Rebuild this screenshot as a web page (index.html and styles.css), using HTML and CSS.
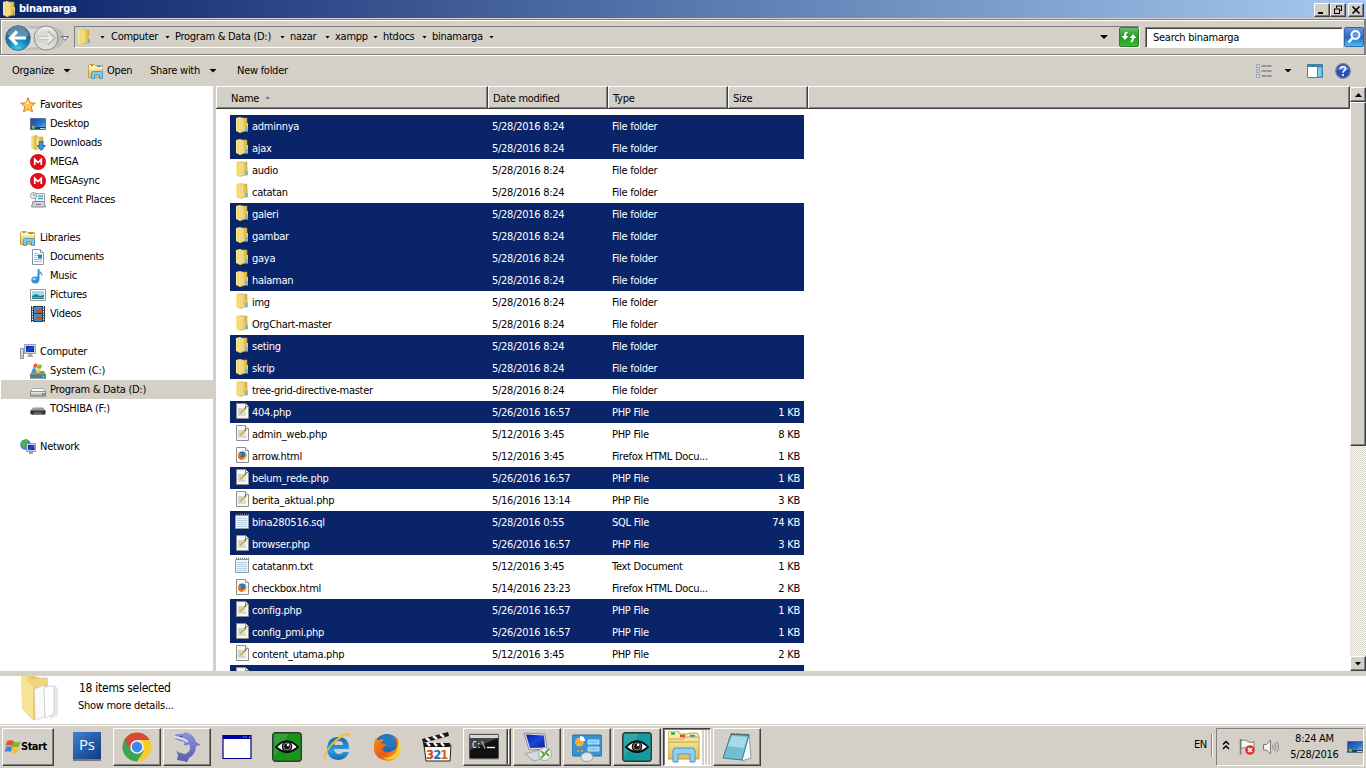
FILE: index.html
```html
<!DOCTYPE html>
<html lang="en">
<head>
<meta charset="utf-8">
<title>binamarga</title>
<link rel="stylesheet" href="styles.css">
</head>
<body>
<svg class="defs" width="0" height="0" aria-hidden="true">
  <defs>
    <linearGradient id="gold" x1="0" x2="1" y1="0" y2="0"><stop offset="0" stop-color="#fbf0a9"/><stop offset=".45" stop-color="#e9cc62"/><stop offset="1" stop-color="#d3ac3d"/></linearGradient>
    <linearGradient id="goldv" x1="0" x2="0" y1="0" y2="1"><stop offset="0" stop-color="#fff5bd"/><stop offset="1" stop-color="#e3bd55"/></linearGradient>
    <linearGradient id="sky" x1="0" x2="1" y1="0" y2="1"><stop offset="0" stop-color="#1a3f9c"/><stop offset=".6" stop-color="#2d77cf"/><stop offset="1" stop-color="#8cd2f6"/></linearGradient>
    <linearGradient id="navy" x1="0" x2="1" y1="0" y2="1"><stop offset="0" stop-color="#0418a8"/><stop offset=".5" stop-color="#1b48e0"/><stop offset="1" stop-color="#0b1c85"/></linearGradient>
    <linearGradient id="drv" x1="0" x2="0" y1="0" y2="1"><stop offset="0" stop-color="#f4f4f4"/><stop offset="1" stop-color="#a3a6a8"/></linearGradient>
    <radialGradient id="backg" cx=".5" cy=".95" r=".9"><stop offset="0" stop-color="#35d5f8"/><stop offset=".45" stop-color="#1685bd"/><stop offset="1" stop-color="#1d5383"/></radialGradient>
    <linearGradient id="fwdg" x1="0" x2="0" y1="0" y2="1"><stop offset="0" stop-color="#efefed"/><stop offset=".5" stop-color="#cfcfcd"/><stop offset="1" stop-color="#e8e8e6"/></linearGradient>
    <linearGradient id="green" x1="0" x2="0" y1="0" y2="1"><stop offset="0" stop-color="#6fc06d"/><stop offset=".5" stop-color="#1e9a1c"/><stop offset="1" stop-color="#35c331"/></linearGradient>
    <linearGradient id="srch" x1="0" x2="0" y1="0" y2="1"><stop offset="0" stop-color="#6a9be4"/><stop offset=".5" stop-color="#2468c9"/><stop offset="1" stop-color="#43c6f2"/></linearGradient>
    <linearGradient id="ps" x1="0" x2="1" y1="0" y2="1"><stop offset="0" stop-color="#3f82d0"/><stop offset="1" stop-color="#0f3b7e"/></linearGradient>
    <linearGradient id="ieg" x1="0" x2="0" y1="0" y2="1"><stop offset="0" stop-color="#1565ae"/><stop offset=".6" stop-color="#2aa0e4"/><stop offset="1" stop-color="#1666b0"/></linearGradient>
    <linearGradient id="ffg" x1="0" x2="1" y1="0" y2="1"><stop offset="0" stop-color="#f7941d"/><stop offset=".55" stop-color="#e55b17"/><stop offset="1" stop-color="#ffc928"/></linearGradient>
    <linearGradient id="dol" x1="0" x2="0" y1="0" y2="1"><stop offset="0" stop-color="#8f93dc"/><stop offset="1" stop-color="#5b5cae"/></linearGradient>

    <symbol id="folder" viewBox="0 0 16 16"><path d="M2 1l4-1 3 1v14l-3 1-4-2z" fill="url(#gold)"/><path d="M7 1h6v13l-6 1z" fill="url(#gold)" stroke="#c9a440" stroke-width=".5"/><path d="M6 .5v15" stroke="#fff6c7" stroke-width="1"/><path d="M12.500 6h1.500v8.500h-1.500z" fill="#ead27b"/><path d="M12 10h1.500v4h-1.500z" fill="#53a9de"/></symbol>
    <symbol id="php" viewBox="0 0 16 16"><path d="M2.500.5h9l3 3v12h-12z" fill="#f7f7f5" stroke="#8e8e8c"/><path d="M11.500.5v3h3" fill="#fff" stroke="#8e8e8c"/><path d="M4 5h8v7H4z" fill="#dfe6e6"/><path d="M4 6h5M4 8h4M4 10h3M4 12h8" stroke="#adb8ba" stroke-width=".8"/><path d="M6.500 10.500l5-5.500" stroke="#d1ab27" stroke-width="1.600"/><path d="M11 5.500l1-1.200" stroke="#555" stroke-width="1.500"/></symbol>
    <symbol id="txt" viewBox="0 0 16 16"><path d="M1.500 2.500h13v13h-13z" fill="#edf5fb" stroke="#8d9aa4"/><path d="M3 5.500h10M3 7.500h10M3 9.500h10M3 11.500h10M3 13.500h10" stroke="#a9c5da" stroke-width=".8"/><path d="M2 1.500h13" stroke="#777" stroke-width="1.600" stroke-dasharray="1 1"/></symbol>
    <symbol id="ff" viewBox="0 0 32 32"><circle cx="16" cy="15" r="13.500" fill="#2468b5"/><path d="M9 5c5-4 12-3 16 1 3 3 2 8-1 10-5-1-8 0-12-2z" fill="#237bbb"/><path d="M4 6c1 1 2 2 3 2 2-1 4-1 6 0-2 1-3 2-3 4 2 0 4 0 5 1-1 2-3 2-4 4 1 4 6 5 10 3 2-1 4-2 5-4 1-5-1-9-4-12 6 2 9 8 8 14-1 8-7 13-15 12C7 29 1 23 2 15c0-4 1-7 2-9z" fill="url(#ffg)"/><path d="M27 6c4 5 5 12 1 18-4 5-11 6-16 3 9 1 14-5 15-10 1-4 1-8 0-11z" fill="#ffd02e"/></symbol>
    <symbol id="html" viewBox="0 0 16 16"><path d="M2.500.5h9l3 3v12h-12z" fill="#fafafa" stroke="#8e8e8c"/><path d="M11.500.5v3h3" fill="#fff" stroke="#8e8e8c"/><use href="#ff" x="3.500" y="4" width="9.500" height="9.500"/></symbol>
    <symbol id="star" viewBox="0 0 16 16"><path d="M8 .8l2 5 5.300.4-4.100 3.500 1.400 5.300L8 12.100 3.400 15l1.400-5.300L.700 6.200 6 5.800z" fill="#ffc653" stroke="#dd7f1f" stroke-width="1"/><path d="M8 3l1 4H5z" fill="#ffeaa0"/></symbol>
    <symbol id="desktop" viewBox="0 0 16 16"><path d="M.5 2.500h15v11H.5z" fill="url(#sky)" stroke="#56708e"/><path d="M1 11h14v2H1z" fill="#263c5e"/><circle cx="3.500" cy="11.500" r="1.800" fill="#4caf50"/><circle cx="3" cy="11" r=".9" fill="#f2a23a"/><path d="M10 12.500h5" stroke="#b5d3ee"/></symbol>
    <symbol id="downloads" viewBox="0 0 16 16"><path d="M1 1l6-1v15l-6-1z" fill="url(#gold)"/><path d="M6 2h7v12H6z" fill="url(#gold)" stroke="#c9a440" stroke-width=".6"/><path d="M9.500 6.500h3.500v4h2.500L11.300 15.500 7 10.500h2.500z" fill="#3796df" stroke="#1d5f9f" stroke-width=".8"/></symbol>
    <symbol id="mega" viewBox="0 0 16 16"><circle cx="8" cy="8" r="8" fill="#e10a17"/><path d="M4.700 11V5.200L8 8.500l3.300-3.300V11" fill="none" stroke="#fff" stroke-width="1.700"/></symbol>
    <symbol id="recent" viewBox="0 0 16 16"><path d="M5.500 1.500h9v9h-9z" fill="#eaf3f9" stroke="#9aa3aa"/><path d="M8 4h5M8 6.500h5" stroke="#47a3cf" stroke-width="1.500"/><path d="M3 9.500h11l1.500 5.500H1.500z" fill="#cfd3d6" stroke="#858b90"/><path d="M6 12.500h5" stroke="#777"/><circle cx="3.500" cy="3.500" r="3" fill="#f5f5f5" stroke="#929292"/><path d="M3.500 1.500v2h2" stroke="#666" fill="none" stroke-width=".7"/></symbol>
    <symbol id="lib" viewBox="0 0 16 16"><path d="M.5 2.500l1-1h5l1 1h7v12H.5z" fill="url(#goldv)" stroke="#c9a13e"/><path d="M3 2.500h2" stroke="#49a63a"/><path d="M9 3.500h4" stroke="#3b93d6"/><path d="M1 5h14" stroke="#fffbe0"/><path d="M3.500 15.500v-6q0-1 1-1h9q1 0 1 1v6h-3V12h-5v3.500z" fill="#7cc9f0" stroke="#3b8fc7" stroke-width=".8"/></symbol>
    <symbol id="docs" viewBox="0 0 16 16"><path d="M2.500.5h8l3 3v12h-11z" fill="#fff" stroke="#8497a6"/><path d="M10.500.5v3h3" fill="#e7eef2" stroke="#8497a6"/><path d="M4 4.500h4M4 6.500h4M4 8.500h3M4 10.500h8M4 12.500h8" stroke="#95a9ba" stroke-width=".8"/><path d="M8 5.500h4v4H8z" fill="#2681cb"/></symbol>
    <symbol id="music" viewBox="0 0 16 16"><path d="M8.500 1v10.500" stroke="#287bbd" stroke-width="1.800"/><path d="M8 0c1 4 6 4 4 9 0-3-2-4-4-4z" fill="#3fa3df"/><ellipse cx="5.300" cy="12" rx="4" ry="3.400" fill="#2c93dc"/><ellipse cx="4.300" cy="11" rx="1.800" ry="1.200" fill="#94d8fa"/></symbol>
    <symbol id="pics" viewBox="0 0 16 16"><path d="M.5 2.500h15v11H.5z" fill="#fff" stroke="#8e989d"/><path d="M2 4h12v8H2z" fill="#9bdcf1"/><path d="M2 9l4-2 4 2 4-1v4H2z" fill="#247b7b"/><path d="M2 10.500h12" stroke="#62b6cc"/></symbol>
    <symbol id="vids" viewBox="0 0 16 16"><path d="M1 0h14v16H1z" fill="#343c40"/><path d="M4 1h8v6H4zM4 8h8v7H4z" fill="#3b91d1"/><path d="M5 3l3 1 3-2v5H7zM5 13l3-4 2 2 2-1v4H6z" fill="#b75732"/><path d="M2.500 0v16M13.500 0v16" stroke="#f4f4f4" stroke-dasharray="1.500 1"/></symbol>
    <symbol id="comp" viewBox="0 0 16 16"><path d="M.5 4.500h3v10h-3z" fill="#d4d7da" stroke="#8c9195"/><path d="M4.500.5h11v9h-11z" fill="#d0d5d8" stroke="#989fa5"/><path d="M6 2h8v6H6z" fill="url(#navy)"/><path d="M9 10h3l1 3H7z" fill="#a3aab0"/><path d="M1.500 12h1" stroke="#3bb536"/></symbol>
    <symbol id="sys" viewBox="0 0 16 16"><path d="M2 8h12l2 4v3.500H0V12z" fill="#799798"/><path d="M0 11.500h16v4H0z" fill="#557f8e"/><path d="M12.500 13.500h2" stroke="#53ff49"/><path d="M4 1q2-1 3.500 0L6.500 5Q5 4 3 5z" fill="#ef5b26"/><path d="M8 1.300q2 1 4 0l-1 4q-2 1-4 0z" fill="#7fba26"/><path d="M2.700 5.500Q5 4.700 6.300 5.700l-1 3.500q-2-1-3.500 0z" fill="#2595df"/><path d="M7 6q2 1 4 0l-1 3.500q-2 1-4 0z" fill="#fbc023"/></symbol>
    <symbol id="drive" viewBox="0 0 16 16"><path d="M2.500 6.500h11l2 3.500v4H.5v-4z" fill="#fafafa" stroke="#9b9b9b" stroke-width=".8"/><path d="M.5 9.500h15v4.500H.5z" fill="url(#drv)" stroke="#777" stroke-width=".8"/><path d="M12 12h2.500" stroke="#27a526" stroke-width="1.600"/></symbol>
    <symbol id="usb" viewBox="0 0 16 16"><path d="M3 6.500h10l2.500 3v4H.5v-4z" fill="#9a9a9a"/><path d="M.5 9.500h15v3q-1 1.500-3 1h-9q-2 .5-3-1z" fill="#363636"/><path d="M4 12h8" stroke="#888"/></symbol>
    <symbol id="net" viewBox="0 0 16 16"><circle cx="5.500" cy="5.500" r="5.300" fill="#2d87cf"/><path d="M2 2l5-2 1 3-3 2 1 3-3 1-2-4z" fill="#55b43e"/><path d="M6.500 4.500h9v8h-9z" fill="#c9d0d6" stroke="#808a91" stroke-width=".8"/><path d="M8 6h6.500v5H8z" fill="url(#navy)"/><path d="M9 13h4v2H9z" fill="#9aa1a7"/></symbol>
    <symbol id="flag" viewBox="0 0 16 16"><path d="M0 3q3-1.500 7 0l-1.500 5q-4-1.500-7 0z" transform="translate(2 -1)" fill="#e5532b"/><path d="M8.500 2.500q3.500 1.500 7 0l-1.500 5q-3.500 1.500-7 0z" fill="#79b735"/><path d="M.2 8q3-1.500 6.700 0l-1.500 5Q2 11.500-1 13z" transform="translate(.8 0)" fill="#3c85d5"/><path d="M7 8.500q3.500 1.500 7 0l-1.500 5q-3.500 1.500-7 0z" fill="#f5c13b"/></symbol>
    <symbol id="eye" viewBox="0 0 30 30"><rect x=".7" y=".7" width="28.600" height="28.600" rx="3" fill="currentColor" stroke="#303a35" stroke-width="1.400"/><path d="M2 2h15L2 25z" fill="#fff" opacity=".12"/><path d="M4 15Q15 3.500 26 15 15 25 4 15z" fill="#fff" stroke="#080808" stroke-width="1.800"/><circle cx="15" cy="14.500" r="5.300" fill="#151515"/><circle cx="15" cy="14.500" r="3.500" fill="none" stroke="#aaa" stroke-width=".8"/><circle cx="16" cy="13" r="1.200" fill="#fff"/></symbol>
  </defs>
</svg>

<div class="screen">
  <header class="titlebar">
    <svg class="i16"><use href="#folder"/></svg><b>binamarga</b>
    <div class="winbtns">
      <span class="wb"><svg viewBox="0 0 12 10"><path d="M2 8h5" stroke="#000" stroke-width="2"/></svg></span><span class="wb"><svg viewBox="0 0 12 10"><path d="M4 1h6M4.500 1v2M9.500 1v5M7 5.500h3M2 4h6M2.500 4v5M7.500 4v5M2 8.500h6" stroke="#000" fill="none"/></svg></span><span class="wb close"><svg viewBox="0 0 12 10"><path d="M2.500 1.500l7 7M9.500 1.500l-7 7" stroke="#000" stroke-width="1.600"/></svg></span>
    </div>
  </header>

  <nav class="address">
    <svg class="navs" viewBox="0 0 68 28"><path d="M17 2h28q15 1 15 12T45 26H17z" fill="#bfbdb8"/><path d="M22 3q8 4 16 0v22q-8-4-16 0z" fill="#dcdad5"/><circle cx="14" cy="14" r="12.300" fill="url(#backg)" stroke="#47677e"/><path d="M3 11Q6 2 14 2t11 9q-6 4-11 3t-11-3z" fill="#fff" opacity=".28"/><path d="M6.500 14H22M13 7.500L6.500 14l6.500 6.500" fill="none" stroke="#fff" stroke-width="3.200"/><circle cx="42" cy="14" r="12" fill="url(#fwdg)" stroke="#898989"/><path d="M35 14h14M43 8l6 6-6 6" fill="none" stroke="#b6b6b4" stroke-width="4"/><path d="M35 14h13M43 9l5 5-5 5" fill="none" stroke="#ececea" stroke-width="2.400"/><path d="M57.500 12.500h7l-3.500 4z" fill="#eee" stroke="#6f6f76"/></svg>
    <div class="path">
      <svg class="i16 pf"><use href="#folder"/></svg><i class="tri first"></i>
      <span class="crumb w64">Computer<i class="tri"></i></span><span class="crumb w115">Program &amp; Data (D:)<i class="tri"></i></span><span class="crumb w45">nazar<i class="tri"></i></span><span class="crumb w48">xampp<i class="tri"></i></span><span class="crumb w49">htdocs<i class="tri"></i></span><span class="crumb w67">binamarga<i class="tri"></i></span>
      <i class="tri big end"></i>
      <svg class="refresh" viewBox="0 0 20 20"><rect x=".5" y=".5" width="19" height="19" rx="1.500" fill="url(#green)" stroke="#2e7b31"/><path d="M9 5q-4-1-4 4H2.500L6 13l3.500-4H7q0-2 2-4zM11 15q4 1 4-4h2.500L14 7l-3.500 4H13q0 2-2 4z" fill="#fff"/></svg>
    </div>
    <div class="search">Search binamarga</div>
    <svg class="sbtn" viewBox="0 0 20 20"><rect x=".5" y=".5" width="19" height="19" rx="1.500" fill="url(#srch)" stroke="#3565a4"/><circle cx="11.500" cy="8" r="4" fill="#5b9be8" stroke="#fff" stroke-width="2"/><path d="M8.500 11L4.500 15.500" stroke="#fff" stroke-width="2.600"/></svg>
  </nav>

  <div class="toolbar">
    <span class="organize">Organize</span><i class="tri big"></i>
    <svg class="i16 opn"><use href="#lib"/></svg><span class="open">Open</span>
    <span class="share">Share with</span><i class="tri big"></i><span class="newf">New folder</span>
    <div class="tools">
      <svg class="i16" viewBox="0 0 16 16"><path d="M.5 1.500h3v3h-3zM.5 6.500h3v3h-3zM.5 11.500h3v3h-3z" fill="#fff" stroke="#7d93a8" stroke-width=".8"/><path d="M5.500 3h5M11 3h4.500M5.500 8h5M11 8h4.500M5.500 13h5M11 13h4.500" stroke="#4d5f73"/><path d="M1.500 3h1M1.500 13h1" stroke="#3483c4"/><path d="M1.500 8h1" stroke="#d31e1e"/></svg>
      <i class="tri big"></i>
      <svg class="pane" viewBox="0 0 16 14"><path d="M.5.5h15v13H.5z" fill="#fff" stroke="#3f7fa8"/><path d="M.5 1h15v2H.5z" fill="#3f7fa8"/><path d="M10.500 3h4.500v10h-4.500z" fill="#83cde8" stroke="#4b90b4"/></svg>
      <svg class="help" viewBox="0 0 16 16"><circle cx="8" cy="8" r="7.300" fill="#2750b5" stroke="#6c8295" stroke-width="1.200"/><path d="M2.500 7Q3 2.500 8 2.500T13.500 7z" fill="#7ca2e8" opacity=".6"/><path d="M5.500 6q.2-2.300 2.600-2.300T10.500 6q0 1-1.300 1.800T8 9.700M8 11v2" stroke="#fff" stroke-width="1.600" fill="none"/></svg>
    </div>
  </div>

  <main class="main">
    <aside class="side">
      <div class="node"><svg class="i16"><use href="#star"/></svg>Favorites</div>
      <div class="node sub"><svg class="i16"><use href="#desktop"/></svg>Desktop</div>
      <div class="node sub"><svg class="i16"><use href="#downloads"/></svg>Downloads</div>
      <div class="node sub"><svg class="i16"><use href="#mega"/></svg>MEGA</div>
      <div class="node sub"><svg class="i16"><use href="#mega"/></svg>MEGAsync</div>
      <div class="node sub gap"><svg class="i16"><use href="#recent"/></svg>Recent Places</div>
      <div class="node"><svg class="i16"><use href="#lib"/></svg>Libraries</div>
      <div class="node sub"><svg class="i16"><use href="#docs"/></svg>Documents</div>
      <div class="node sub"><svg class="i16"><use href="#music"/></svg>Music</div>
      <div class="node sub"><svg class="i16"><use href="#pics"/></svg>Pictures</div>
      <div class="node sub gap"><svg class="i16"><use href="#vids"/></svg>Videos</div>
      <div class="node"><svg class="i16"><use href="#comp"/></svg>Computer</div>
      <div class="node sub"><svg class="i16"><use href="#sys"/></svg>System (C:)</div>
      <div class="node sub cur"><svg class="i16"><use href="#drive"/></svg>Program &amp; Data (D:)</div>
      <div class="node sub gap"><svg class="i16"><use href="#usb"/></svg>TOSHIBA (F:)</div>
      <div class="node"><svg class="i16"><use href="#net"/></svg>Network</div>
    </aside>
    <section class="files">
      <div class="head"><span class="h name">Name<i class="asc"></i></span><span class="h">Date modified</span><span class="h">Type</span><span class="h size">Size</span><span class="h rest"></span></div>
      <div class="rows">
        <div class="row sel"><svg class="i16"><use href="#folder"/></svg><span>adminnya</span><span>5/28/2016 8:24</span><span>File folder</span><span></span></div>
        <div class="row sel"><svg class="i16"><use href="#folder"/></svg><span>ajax</span><span>5/28/2016 8:24</span><span>File folder</span><span></span></div>
        <div class="row"><svg class="i16"><use href="#folder"/></svg><span>audio</span><span>5/28/2016 8:24</span><span>File folder</span><span></span></div>
        <div class="row"><svg class="i16"><use href="#folder"/></svg><span>catatan</span><span>5/28/2016 8:24</span><span>File folder</span><span></span></div>
        <div class="row sel"><svg class="i16"><use href="#folder"/></svg><span>galeri</span><span>5/28/2016 8:24</span><span>File folder</span><span></span></div>
        <div class="row sel"><svg class="i16"><use href="#folder"/></svg><span>gambar</span><span>5/28/2016 8:24</span><span>File folder</span><span></span></div>
        <div class="row sel"><svg class="i16"><use href="#folder"/></svg><span>gaya</span><span>5/28/2016 8:24</span><span>File folder</span><span></span></div>
        <div class="row sel"><svg class="i16"><use href="#folder"/></svg><span>halaman</span><span>5/28/2016 8:24</span><span>File folder</span><span></span></div>
        <div class="row"><svg class="i16"><use href="#folder"/></svg><span>img</span><span>5/28/2016 8:24</span><span>File folder</span><span></span></div>
        <div class="row"><svg class="i16"><use href="#folder"/></svg><span>OrgChart-master</span><span>5/28/2016 8:24</span><span>File folder</span><span></span></div>
        <div class="row sel"><svg class="i16"><use href="#folder"/></svg><span>seting</span><span>5/28/2016 8:24</span><span>File folder</span><span></span></div>
        <div class="row sel"><svg class="i16"><use href="#folder"/></svg><span>skrip</span><span>5/28/2016 8:24</span><span>File folder</span><span></span></div>
        <div class="row"><svg class="i16"><use href="#folder"/></svg><span>tree-grid-directive-master</span><span>5/28/2016 8:24</span><span>File folder</span><span></span></div>
        <div class="row sel"><svg class="i16"><use href="#php"/></svg><span>404.php</span><span>5/26/2016 16:57</span><span>PHP File</span><span>1 KB</span></div>
        <div class="row"><svg class="i16"><use href="#php"/></svg><span>admin_web.php</span><span>5/12/2016 3:45</span><span>PHP File</span><span>8 KB</span></div>
        <div class="row"><svg class="i16"><use href="#html"/></svg><span>arrow.html</span><span>5/12/2016 3:45</span><span>Firefox HTML Docu...</span><span>1 KB</span></div>
        <div class="row sel"><svg class="i16"><use href="#php"/></svg><span>belum_rede.php</span><span>5/26/2016 16:57</span><span>PHP File</span><span>1 KB</span></div>
        <div class="row"><svg class="i16"><use href="#php"/></svg><span>berita_aktual.php</span><span>5/16/2016 13:14</span><span>PHP File</span><span>3 KB</span></div>
        <div class="row sel"><svg class="i16"><use href="#txt"/></svg><span>bina280516.sql</span><span>5/28/2016 0:55</span><span>SQL File</span><span>74 KB</span></div>
        <div class="row sel"><svg class="i16"><use href="#php"/></svg><span>browser.php</span><span>5/26/2016 16:57</span><span>PHP File</span><span>3 KB</span></div>
        <div class="row"><svg class="i16"><use href="#txt"/></svg><span>catatanm.txt</span><span>5/12/2016 3:45</span><span>Text Document</span><span>1 KB</span></div>
        <div class="row"><svg class="i16"><use href="#html"/></svg><span>checkbox.html</span><span>5/14/2016 23:23</span><span>Firefox HTML Docu...</span><span>2 KB</span></div>
        <div class="row sel"><svg class="i16"><use href="#php"/></svg><span>config.php</span><span>5/26/2016 16:57</span><span>PHP File</span><span>1 KB</span></div>
        <div class="row sel"><svg class="i16"><use href="#php"/></svg><span>config_pmi.php</span><span>5/26/2016 16:57</span><span>PHP File</span><span>1 KB</span></div>
        <div class="row"><svg class="i16"><use href="#php"/></svg><span>content_utama.php</span><span>5/12/2016 3:45</span><span>PHP File</span><span>2 KB</span></div>
        <div class="row sel"><svg class="i16"><use href="#php"/></svg><span></span><span></span><span></span><span></span></div>
      </div>
    </section>
    <div class="scroll"><span class="sb"><i class="tri big up"></i></span><span class="thumb"></span><span class="track"></span><span class="sb"><i class="tri big"></i></span></div>
  </main>

  <section class="details">
    <svg class="bigf" viewBox="0 0 42 46"><path d="M34 9l4 3v27l-8 5z" fill="#e8e8e8"/><path d="M1 0h12l12 3v14L13 44 2 33z" fill="url(#gold)"/><path d="M8 4l18-3 2 1v35l-14 7z" fill="#edd47f"/><path d="M14 13l11-4v32l-10 3z" fill="#f9f9f9" stroke="#c6c6c6" stroke-width=".6"/><path d="M24 11l10-1v28l-9 4z" fill="#fff" stroke="#bdbdbd" stroke-width=".7"/><path d="M1 0l13 11v33L2 33z" fill="#f6e494"/><path d="M14 11v33" stroke="#d9b85e"/></svg>
    <div><p class="count">18 items selected</p><p class="more">Show more details...</p></div>
  </section>

  <footer class="taskbar">
    <div class="btn start"><svg class="i16"><use href="#flag"/></svg><b>Start</b></div>
    <div class="apps">
      <div class="app"><svg viewBox="0 0 30 30"><rect x="1" y="1" width="28" height="28" fill="#7b7a78"/><rect x="1" y="0" width="28" height="27" fill="url(#ps)"/><text x="7" y="18" class="pst">Ps</text></svg></div>
      <div class="app btn"><svg viewBox="0 0 30 30"><circle cx="15" cy="15" r="14.500" fill="#f5cc2c"/><path d="M15 15L2.400 7.800A14.500 14.500 0 0 0 15 29.500l7-11z" fill="#39a559"/><path d="M15 15V8h12.700A14.500 14.500 0 0 0 2.400 7.800l6.500 10.700z" fill="#d8483b"/><circle cx="15" cy="15" r="6.800" fill="#fff"/><circle cx="15" cy="15" r="5.400" fill="#4386ee"/></svg></div>
      <div class="app btn"><svg viewBox="0 0 30 30"><path d="M3 3Q5 1 10 2q3-3 6-1 6 2 8 9l5 3-5 1q0 8-7 12l-2 4-4-1-6-1 1-5-2-5q2 3 6 3 3 2 5 0 5-3 2-9-2 2-5 1l1-3Q7 9 3 7z" fill="url(#dol)"/><path d="M3 5q8 1 13 5" stroke="#e2e1f7" stroke-width="2" fill="none"/><circle cx="9" cy="4.500" r=".8" fill="#222"/></svg></div>
      <div class="app"><svg viewBox="0 0 30 30"><path d="M1 3.500h28v23H1z" fill="#fff" stroke="#00008b" stroke-width="1.200"/><path d="M1 3h28v4H1z" fill="#0000a5"/><path d="M21 5h5" stroke="#1ce4ff" stroke-dasharray="1.500 1"/><path d="M27 4h1.500v2H27z" fill="#f33"/></svg></div>
      <div class="app gre"><svg><use href="#eye"/></svg></div>
      <div class="app"><svg viewBox="0 0 30 30"><path d="M27 17H12q1 5 5 5 3 0 4-2h6q-3 8-11 8Q5 27 5 16 6 5 16 5q11 0 11 12zM12 13h9q0-4-4-4-4 0-5 4z" fill="url(#ieg)" fill-rule="evenodd"/><path d="M4 29Q-1 27 6 16 13 6 22 2q8-3 6 4 0-4-5-2Q14 8 7 17 1 26 4 29z" fill="#f6bd2e"/></svg></div>
      <div class="app"><svg><use href="#ff" width="30" height="31"/></svg></div>
      <div class="app"><svg viewBox="0 0 30 30"><path d="M2 13h27l-1 16H4z" fill="#fafafa" stroke="#242424"/><path d="M1 11h27v4H2z" fill="#161616"/><path d="M0 7L26 0l1 4L1 11z" fill="#1a1a1a"/><path d="M4 6l4 3M11 4l4 3M18 2l4 3M5 11l3 3M12 11l3 3M19 11l3 3" stroke="#fff" stroke-width="2.400"/><text x="4" y="27" class="mpc"><tspan fill="#db3d20">3</tspan><tspan fill="#2367bb">2</tspan><tspan fill="#dd5a17">1</tspan></text></svg></div>
      <div class="app btn stack"><svg viewBox="0 0 30 30"><path d="M0 2h30v25H0z" fill="#111" stroke="#999"/><path d="M1 3h28v3H1z" fill="#d5d6d7"/><path d="M1 6h28L1 18z" fill="#454545"/><text x="3" y="16" class="cmd">C:\</text><path d="M18 15.500h8" stroke="#fff" stroke-width="1.300"/></svg></div>
      <div class="app btn"><svg viewBox="0 0 30 30"><path d="M3 22l18-5 6 8-15 4z" fill="#d6dade" stroke="#9ca3aa"/><path d="M2 1l21 1 2 15-18 1z" fill="#dfe3e6" stroke="#87919b"/><path d="M4 2.500l18 1 1 12-15 .5z" fill="url(#navy)"/><circle cx="23" cy="22" r="6.500" fill="#e9ece8" stroke="#a2aaa3"/><path d="M19 19l3.500 3.500L19 26M27 17l-3.500 3.500L27 24" fill="none" stroke="#33a02c" stroke-width="1.600"/></svg></div>
      <div class="app btn"><svg viewBox="0 0 30 30"><rect x="0" y="3" width="30" height="21" rx="1.500" fill="#3893d2" stroke="#236da7"/><circle cx="7.500" cy="10" r="4.500" fill="#f2ae31"/><path d="M8 9V4q5 0 5 5z" fill="#fff"/><path d="M16 8h11v4H16zM16 15h11v4H16z" fill="#81caf3" stroke="#d4f0ff" stroke-width=".8"/><path d="M5 19h2M9 19h2" stroke="#ff922c" stroke-width="2"/><ellipse cx="15" cy="25" rx="6" ry="4.500" fill="#e4e6e7" stroke="#9ba3a7"/></svg></div>
      <div class="app btn tea"><svg><use href="#eye"/></svg></div>
      <div class="app btn pressed stack2"><svg class="exp" viewBox="0 0 32 32"><path d="M0 2l2-2h8l2 3h8l2-1h7l2 3v23H0z" fill="url(#goldv)" stroke="#bf9c46"/><path d="M3 2.500h4" stroke="#36a84a" stroke-width="2.500"/><path d="M12 5h5" stroke="#dc4638" stroke-width="2.500"/><path d="M22 5h5" stroke="#3e91cf" stroke-width="2.500"/><path d="M1 8h14l3-2h12M1 11h29" fill="none" stroke="#c8a14a"/><path d="M5 31V20q0-3 3-3h16q3 0 3 3v11h-5v-8H10v8z" fill="#8ed0f1" stroke="#4b9acc"/></svg></div>
      <div class="app btn"><svg viewBox="0 0 30 30"><path d="M20 3l7-1 2 24-9 3z" fill="#f5f6f7" stroke="#8f9fa8"/><path d="M9 2l18 1-7 25-19-2z" fill="#73bed0" stroke="#397e93"/><path d="M10 4l15 1-3 11L6 14z" fill="#a7dbe5"/><path d="M9 2l18 1" stroke="#5e646a" stroke-width="2" stroke-dasharray="1.500 1"/></svg></div>
    </div>
    <div class="tray">
      <span class="lang">EN</span><i class="sep"></i>
      <div class="traybox">
        <svg class="chev" viewBox="0 0 8 10"><path d="M1 4.500l3-3 3 3M1 9l3-3 3 3" fill="none" stroke="#000" stroke-width="1.500"/></svg>
        <svg class="t16" viewBox="0 0 16 16"><path d="M1.500 0v15.500" stroke="#777" stroke-width="1.500"/><path d="M2 1.500q4-1.500 7 1t6 0v7q-3 2-6 0t-7 0z" fill="#f8f8f8" stroke="#7f7f7f"/><circle cx="11" cy="11" r="4.800" fill="#de3430"/><path d="M9 9l4 4M13 9l-4 4" stroke="#fff" stroke-width="1.600"/></svg>
        <svg class="t16 snd" viewBox="0 0 16 16"><path d="M.5 5.500h3l4-4.500v14l-4-4h-3z" fill="#f3f3f3" stroke="#777"/><path d="M9.500 6q1.500 2 0 4.500M11.500 4q3 4 0 8M13.500 2.500q4 5.500 0 11" fill="none" stroke="#858585"/></svg>
        <div class="clock"><span>8:24 AM</span><span>5/28/2016</span></div>
        <svg class="t16"><use href="#desktop"/></svg>
      </div>
    </div>
  </footer>
</div>
</body>
</html>
```
FILE: styles.css
```css
* { box-sizing: border-box; }
body { margin: 0; background: #d4d0c8; color: #000; font: 11px/14px "DejaVu Sans Condensed", "DejaVu Sans", sans-serif; font-stretch: condensed; letter-spacing: -0.27px; overflow: hidden; }
svg { display: block; flex: none; }
p { margin: 0; }
.defs { position: absolute; }
.screen { width: 1366px; height: 768px; display: flex; flex-direction: column; overflow: hidden; white-space: nowrap; }
.i16 { width: 16px; height: 16px; }

.titlebar { height: 18px; display: flex; align-items: center; padding: 0 2px 0 1px; gap: 2px; color: #fff; background: linear-gradient(90deg, #0a246a, #a6caf0); }
.winbtns { margin-left: auto; display: flex; padding-top: 1px; }
.wb { width: 16px; height: 14px; background: #d4d0c8; border: 1px solid; border-color: #fff #404040 #404040 #fff; box-shadow: inset -1px -1px #808080; padding: 1px; }
.wb svg { width: 12px; height: 10px; }
.close { margin-left: 2px; }

.address { height: 36px; margin-top: 1px; padding-left: 3px; display: flex; align-items: center; border: 1px solid #808080; border-right-width: 2px; box-shadow: inset 1px 1px #fff, 0 1px #fff; }
.navs { width: 68px; height: 28px; margin: 2px 2px 0 0; }
.path { width: 1066px; height: 22px; display: flex; align-items: center; border: 1px solid; border-color: #808080 #fff #fff #808080; }
.pf { margin-left: 1px; }
.tri { flex: none; width: 5px; height: 3px; background: #000; clip-path: polygon(0 0, 100% 0, 50% 100%); }
.tri.big { width: 8px; height: 4px; }
.tri.first { margin: 0 6px 0 8px; }
.crumb { display: flex; align-items: center; justify-content: space-between; padding-right: 5px; flex: none; }
.w64 { width: 64px; } .w115 { width: 115px; } .w45 { width: 45px; } .w48 { width: 48px; } .w49 { width: 49px; } .w67 { width: 67px; }
.end { margin-left: auto; margin-right: 11px; }
.refresh { width: 20px; height: 20px; }
.search { width: 198px; height: 21px; margin-left: 5px; padding: 3px 7px; background: #fff; border: 1px solid; border-color: #808080 #fff #fff #808080; box-shadow: inset 1px 1px #404040; }
.sbtn { width: 20px; height: 20px; margin-left: 1px; }

.toolbar { height: 31px; display: flex; align-items: center; padding-left: 12px; }
.organize { width: 51px; }
.opn { margin-left: 17px; }
.open { margin-left: 3px; width: 43px; }
.share { width: 59px; }
.newf { margin-left: 20px; }
.tools { margin-left: auto; display: flex; align-items: center; padding-right: 15px; }
.tools .tri { margin: 0 15px 0 12px; }
.pane { width: 16px; height: 14px; }
.help { width: 16px; height: 16px; margin-left: 12px; }

.main { height: 585px; display: flex; background: #fff; }
.side { width: 216px; border-right: 3px solid #d4d0c8; padding: 9px 0 0 1px; }
.node { height: 19px; display: flex; align-items: center; gap: 4px; padding-left: 19px; }
.node.sub { padding-left: 29px; }
.gap { margin-bottom: 19px; }
.cur { background: #d4d0c8; }
.files { width: 1134px; overflow: hidden; }
.head { height: 23px; display: flex; background: #d4d0c8; border-bottom: 1px solid #404040; }
.h { width: 120px; padding: 5px 4px 0; border-top: 1px solid #fff; border-left: 1px solid #fff; border-right: 1px solid #404040; box-shadow: inset -1px -1px #808080; }
.h.name { width: 272px; padding-left: 14px; display: flex; gap: 6px; }
.h.size { width: 80px; }
.h.rest { flex: 1; }
.asc { width: 5px; height: 3px; margin-top: 4px; background: #808080; clip-path: polygon(50% 0, 100% 100%, 0 100%); }
.rows { padding: 6px 0 0 14px; }
.row { width: 574px; height: 22px; display: grid; grid-template-columns: 18px 240px 120px 120px 1fr; align-items: center; padding: 0 4px; }
.row .i16 { margin-top: -2px; }
.row span:last-child { text-align: right; }
.row span { padding-top: 1px; }
.sel { background: #0a246a; color: #fff; }
.scroll { width: 16px; display: flex; flex-direction: column; padding-top: 1px; background: #d4d0c8; }
.sb, .thumb { border: 1px solid; border-color: #fff #404040 #404040 #fff; box-shadow: inset -1px -1px #808080; background: #d4d0c8; }
.sb { height: 15px; display: flex; align-items: center; justify-content: center; }
.sb .tri { width: 7px; }
.up { transform: rotate(180deg); }
.thumb { height: 344px; }
.track { flex: 1; background: repeating-conic-gradient(#fff 0 25%, #d4d0c8 0 50%) 0 0 / 2px 2px; }

.details { height: 53px; display: flex; border-top: 5px solid #d4d0c8; background: #fff; padding-left: 20px; }
.bigf { width: 42px; height: 46px; }
.details div { padding-left: 16px; }
.count { font-size: 12px; padding: 5px 0 0 1px; }
.more { padding-top: 4px; }

.taskbar { height: 44px; display: flex; padding: 4px 2px 3px; background: #d4d0c8; box-shadow: inset 0 1px #d4d0c8, inset 0 2px #fff; }
.btn { border: 1px solid; border-color: #fff #404040 #404040 #fff; box-shadow: inset -1px -1px #808080; }
.start { width: 52px; height: 38px; display: flex; align-items: center; padding-left: 2px; }
.start b { letter-spacing: -0.5px; }
.apps { display: flex; gap: 2px; padding-left: 9px; }
.app { width: 48px; height: 38px; display: flex; align-items: center; justify-content: center; }
.app svg { width: 30px; height: 30px; }
.app .exp { width: 32px; height: 32px; }
.gre { color: #19941b; }
.tea { color: #139ba0; }
.stack { background: linear-gradient(90deg, transparent 42px, #808080 42px 43px, #404040 43px 44px, #fff 44px 45px, transparent 45px); justify-content: flex-start; padding-left: 5px; }
.pressed { border-color: #404040 #fff #fff #404040; box-shadow: inset 1px 1px #808080; background: #fff; justify-content: flex-start; padding-left: 4px; }
.stack2 { background: linear-gradient(90deg, #fff 38px, #d4d0c8 38px 40px, #fff 40px 41px, #d4d0c8 41px 43px, #fff 43px 44px, #d4d0c8 44px); }
.pst { font: 15px "Open Sans", sans-serif; fill: #fff; }
.mpc { font: bold 13px "DejaVu Sans Condensed", sans-serif; letter-spacing: -1px; }
.cmd { font: 8px "DejaVu Sans Mono", monospace; fill: #fff; }
.tray { margin-left: auto; display: flex; }
.lang { padding-top: 10px; }
.sep { width: 2px; height: 23px; margin: 6px 3px 0 4px; border-left: 1px solid #808080; border-right: 1px solid #fff; }
.traybox { width: 148px; height: 38px; display: flex; align-items: center; border: 1px solid; border-color: #808080 #fff #fff #808080; padding-left: 5px; }
.chev { width: 8px; height: 10px; margin-bottom: 4px; }
.t16 { width: 16px; height: 16px; margin-left: 9px; }
.t16.snd { margin-left: 8px; }
.clock { display: flex; flex-direction: column; align-items: center; width: 62px; margin-left: 6px; margin-right: -6px; gap: 2px; }
```
